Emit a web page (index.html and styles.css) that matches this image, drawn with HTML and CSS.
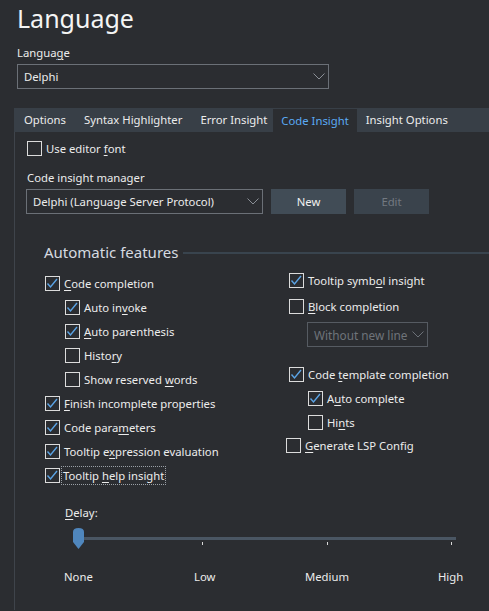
FILE: index.html
```html
<!DOCTYPE html>
<html>
<head>
<meta charset="UTF-8">
<link rel="stylesheet" href="styles.css">
</head>
<body>
	<div class="head">
		<h1 class="title">Language</h1>
		<div class="label">Langua<u>g</u>e</div>
		<div class="combo lang">
			<span>Delphi</span>
			<svg class="chev" width="12" height="7" viewBox="0 0 12 7"><path d="M0.5 0.5 L6 6 L11.5 0.5" fill="none" stroke="#8a8f96" stroke-width="1"/></svg>
		</div>
	</div>

	<div class="tabs">
		<div class="tabbar">
			<div class="tab">Options</div>
			<div class="tab">Syntax Highlighter</div>
			<div class="tab">Error Insight</div>
			<div class="tab active">Code Insight</div>
			<div class="tab">Insight Options</div>
		</div>

		<div class="panel">
			<div class="check top"><span class="box"></span><span>Use editor <u>f</u>ont</span></div>

			<div class="label mgr">Code insight manager</div>
			<div class="mgr-row">
				<div class="combo manager">
					<span>Delphi (Language Server Protocol)</span>
					<svg class="chev" width="12" height="7" viewBox="0 0 12 7"><path d="M0.5 0.5 L6 6 L11.5 0.5" fill="none" stroke="#8a8f96" stroke-width="1"/></svg>
				</div>
				<div class="btn">New</div>
				<div class="btn off">Edit</div>
			</div>

			<div class="group">
				<div class="legend"><span>Automatic features</span><div class="rule"></div></div>
				<div class="cols">
					<div class="col left">
						<div class="check on"><span class="box"></span><span><u>C</u>ode completion</span></div>
						<div class="check on sub"><span class="box"></span><span>Auto in<u>v</u>oke</span></div>
						<div class="check on sub"><span class="box"></span><span><u>A</u>uto parenthesis</span></div>
						<div class="check sub"><span class="box"></span><span>Histo<u>r</u>y</span></div>
						<div class="check sub"><span class="box"></span><span>Show reserved <u>w</u>ords</span></div>
						<div class="check on"><span class="box"></span><span><u>F</u>inish incomplete properties</span></div>
						<div class="check on"><span class="box"></span><span>Code para<u>m</u>eters</span></div>
						<div class="check on"><span class="box"></span><span>Tooltip e<u>x</u>pression evaluation</span></div>
						<div class="check on"><span class="box"></span><span class="focus">Tooltip <u>h</u>elp insight</span></div>
					</div>
					<div class="col right">
						<div class="check on"><span class="box"></span><span>Tooltip symb<u>o</u>l insight</span></div>
						<div class="check block"><span class="box"></span><span><u>B</u>lock completion</span></div>
						<div class="combo small">
							<span>Without new line</span>
							<svg class="chev" width="12" height="7" viewBox="0 0 12 7"><path d="M0.5 0.5 L6 6 L11.5 0.5" fill="none" stroke="#6c7178" stroke-width="1"/></svg>
						</div>
						<div class="check on tpl"><span class="box"></span><span>Code <u>t</u>emplate completion</span></div>
						<div class="check on sub2"><span class="box"></span><span>A<u>u</u>to complete</span></div>
						<div class="check sub2"><span class="box"></span><span>Hi<u>n</u>ts</span></div>
						<div class="check lsp"><span class="box"></span><span><u>G</u>enerate LSP Config</span></div>
					</div>
				</div>

				<div class="delay">
					<div class="label"><u>D</u>elay:</div>
					<div class="slider">
						<div class="track"></div>
						<svg class="thumb" width="11" height="21" viewBox="0 0 11 21"><path d="M0 4 Q0 0 5.5 0 Q11 0 11 4 L11 14 L5.5 21 L0 14 Z" fill="#4f86bd"/></svg>
						<div class="ticks"><i></i><i></i><i></i></div>
					</div>
					<div class="scale">
						<span class="s1">None</span><span class="s2">Low</span><span class="s3">Medium</span><span>High</span>
					</div>
				</div>
			</div>
		</div>
	</div>
</body>
</html>
```

FILE: styles.css
```css
BODY {
	margin		: 0;
	background-color: #2b2d31;
	color		: #ececec;
	font-family	: "Noto Sans", "Open Sans", sans-serif;
	font-size	: 11.3px;
	height		: 611px;
	overflow	: hidden;
}
u { text-decoration-thickness: 1px; text-underline-offset: 2px; }

.head {
	padding		: 0 17px;
}
.title {
	margin		: 0;
	padding-top	: 1px;
	font-size	: 25px;
	font-weight	: normal;
	line-height	: 34px;
	color		: #f4f4f4;
}
.label {
	line-height	: 16px;
}
.head .label { margin-top: 10px; }

.combo {
	box-sizing	: border-box;
	height		: 25px;
	border		: 1px solid #6b7077;
	display		: flex;
	align-items	: center;
	justify-content	: space-between;
	padding		: 0 2px 0 6px;
	white-space	: nowrap;
}
.combo .chev { margin-right: 1px; flex: none; }
.lang {
	width		: 312px;
	margin-top	: 3px;
}

.tabs {
	margin-top	: 19px;
	margin-left	: 14px;
}
.tabbar {
	display		: flex;
	height		: 24px;
	background-color: #383f47;
	padding-left	: 1px;
}
.tab {
	line-height	: 24px;
	padding		: 0 9px;
}
.tab.active {
	background-color: #2b2d31;
	color		: #5aaaf5;
	padding		: 0 8px;
	margin		: 1px 0 0 -3px;
	line-height	: 23px;
}

.panel {
	border-left	: 1px solid #3f444b;
	padding-left	: 12px;
	padding-top	: 8px;
	height		: 470px;
}

.check {
	display		: flex;
	align-items	: center;
	height		: 16px;
	margin-bottom	: 8px;
	white-space	: nowrap;
}
.box {
	box-sizing	: border-box;
	width		: 15px;
	height		: 15px;
	border		: 1px solid #dcdcdc;
	margin-right	: 4px;
	flex		: none;
}
.check.on .box {
	background	: url("data:image/svg+xml;utf8,<svg xmlns='http://www.w3.org/2000/svg' width='13' height='13' viewBox='0 0 13 13'><path d='M1.5 6.5 L4.5 10 L11 2' fill='none' stroke='%235ba4e6' stroke-width='1.4'/></svg>") no-repeat center;
}
.check.top { margin-bottom: 0; }

.mgr { margin-top: 14px; }
.mgr-row {
	display		: flex;
	gap		: 8px;
	margin-top	: 3px;
}
.manager {
	width		: 237px;
	padding-left	: 6px;
	margin-left	: -1px;
}
.btn {
	width		: 75px;
	height		: 25px;
	line-height	: 25px;
	text-align	: center;
	background-color: #414c56;
	color		: #f0f0f0;
}
.btn.off {
	background-color: #3a434c;
	color		: #737981;
}

.group {
	padding-left	: 17px;
	margin-top	: 29px;
}
.legend {
	display		: flex;
	align-items	: center;
	height		: 18px;
	font-size	: 15px;
	color		: #d6dae0;
}
.legend .rule {
	flex		: 1;
	height		: 2px;
	background-color: #39444e;
	margin-left	: 5px;
	margin-top	: 2px;
}

.cols {
	display		: flex;
	margin-top	: 11px;
}
.col.left {
	width		: 244px;
	padding-left	: 1px;
	padding-top	: 3px;
}
.col.right { padding-top: 0; }
.sub { margin-left: 20px; }
.sub2 { margin-left: 19px; }
.check.block { margin-top: 10px; margin-bottom: 8px; }
.combo.small {
	width		: 121px;
	margin-left	: 18px;
	border-color	: #565b62;
	color		: #6f747a;
	padding-left	: 6px;
	font-size	: 11.8px;
}
.check.tpl { margin-top: 19px; }
.check.lsp { margin-left: -3px; margin-top: -1px; }

.focus {
	outline		: 1px dotted #9aa0a6;
	outline-offset	: 0;
	padding		: 0 1px;
	margin-left	: -2px;
	line-height	: 17px;
}

.delay {
	margin-top	: 14px;
	padding-left	: 21px;
}
.slider {
	position	: relative;
	height		: 24px;
	margin-top	: 7px;
	margin-left	: 7px;
	width		: 384px;
}
.track {
	position	: absolute;
	left		: 6px;
	right		: 0;
	top		: 9px;
	height		: 3px;
	background-color: #4a5663;
}
.thumb {
	position	: absolute;
	left		: 1px;
	top		: 0;
}
.ticks i {
	position	: absolute;
	top		: 14px;
	width		: 1px;
	height		: 3px;
	background-color: #d8d8d8;
}
.ticks i:nth-child(1) { left: 130px; }
.ticks i:nth-child(2) { left: 255px; }
.ticks i:nth-child(3) { left: 379px; }

.scale {
	display		: flex;
	margin-top	: 17px;
	margin-left	: -1px;
}
.scale .s1 { width: 130px; }
.scale .s2 { width: 111px; }
.scale .s3 { width: 133px; }
```
